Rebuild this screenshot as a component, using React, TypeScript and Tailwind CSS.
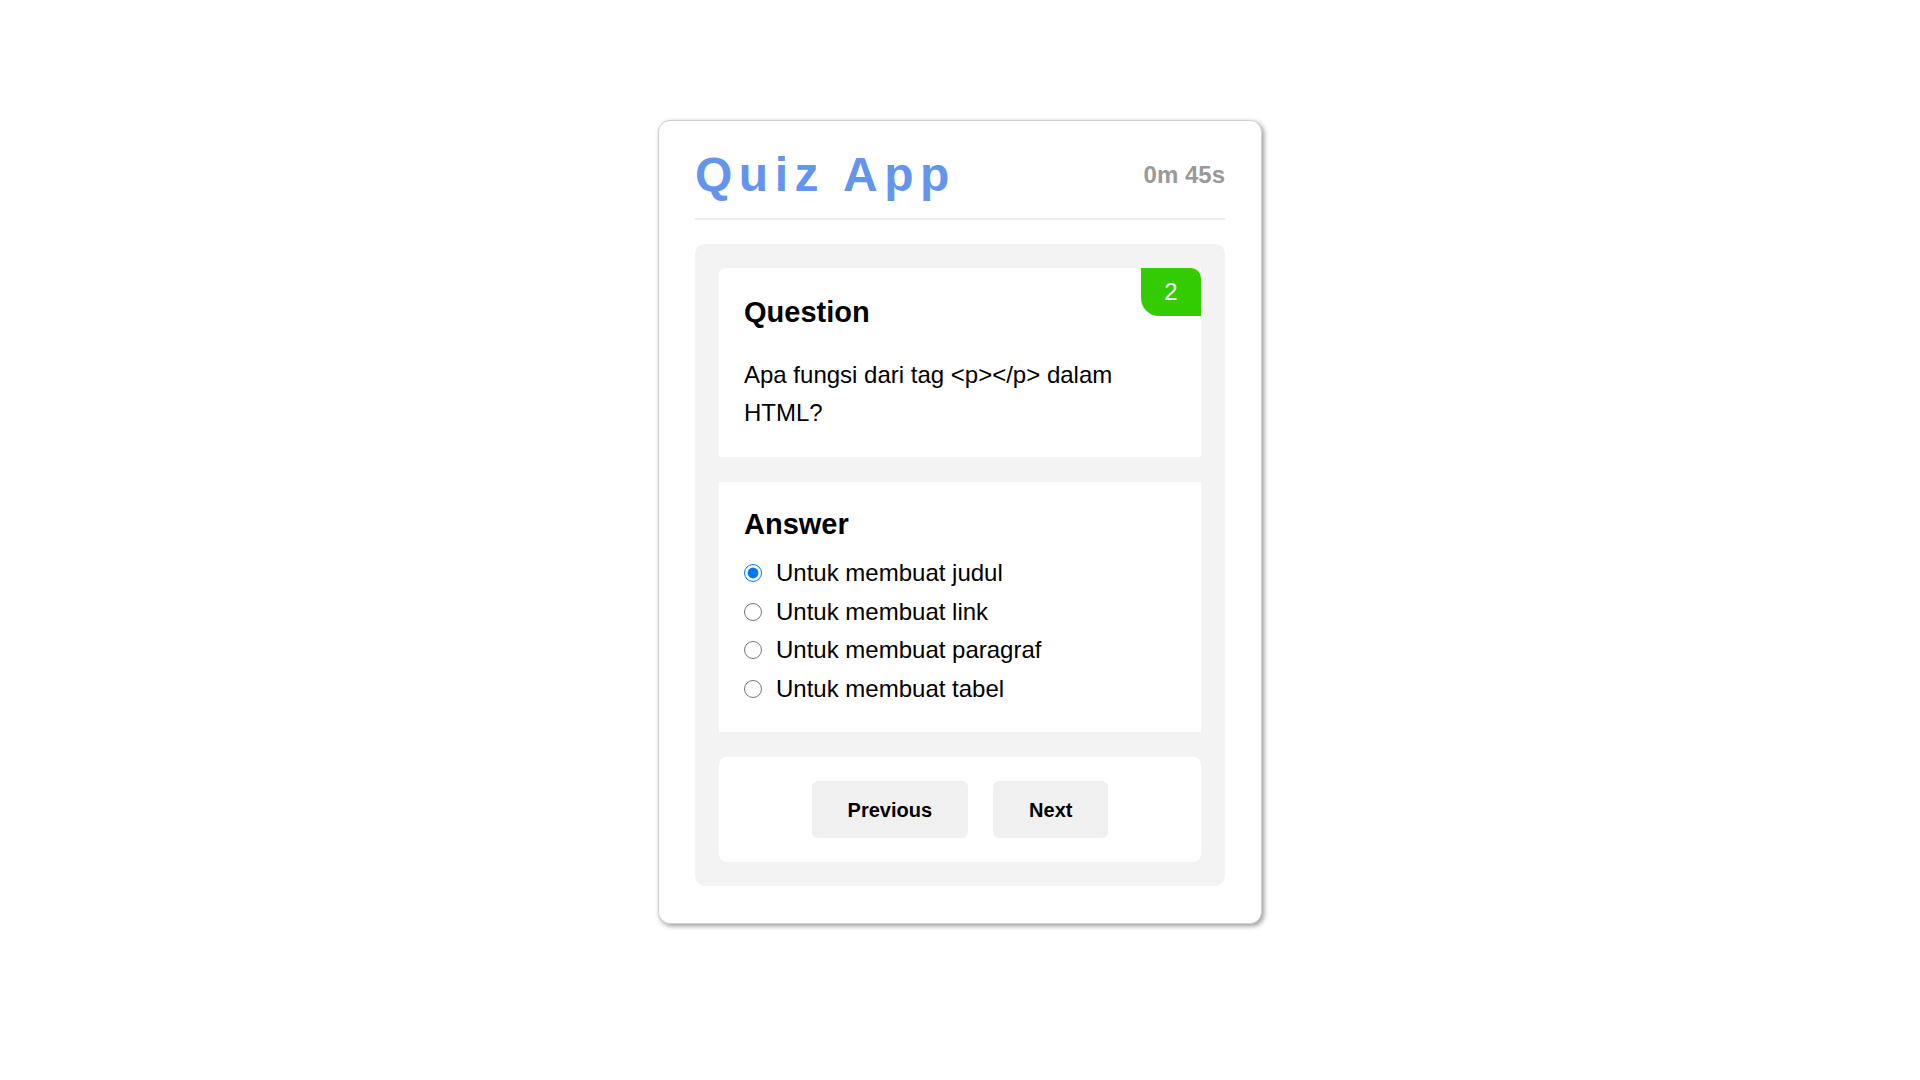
import React, { useState } from 'react';

const options = [
  'Untuk membuat judul',
  'Untuk membuat link',
  'Untuk membuat paragraf',
  'Untuk membuat tabel',
];

export default function App() {
  const [selected, setSelected] = useState(0);

  return (
    <div className="min-h-screen bg-white pt-[120px] font-['Liberation_Sans',Arial,sans-serif] text-black">
      <div className="mx-auto w-[604px] rounded-[12px] border border-[#d0d0d0] bg-white px-[36px] pt-[26px] pb-[37px] shadow-[2px_2px_5px_rgba(0,0,0,0.4)]">
        {/* header */}
        <div className="flex items-center justify-between border-b-2 border-[#eeeeee] pb-[16px]">
          <h1 className="text-[48px] leading-[55px] font-bold tracking-[6.5px] text-[#6495ed]">Quiz App</h1>
          <span className="text-[24px] font-bold text-[#999999]">0m 45s</span>
        </div>

        <div className="mt-[24px] flex flex-col gap-[25px] rounded-[10px] bg-[#f3f3f3] p-[24px]">
          {/* question */}
          <div className="relative rounded-tl-md bg-white px-[25px] pt-[28px] pb-[25px]">
            <div className="absolute top-0 right-0 flex h-[48px] w-[60px] items-center justify-center rounded-tr-[10px] rounded-bl-[18px] bg-[#33cc00] text-[24px] text-white">
              2
            </div>
            <h2 className="mb-[27px] text-[29px] leading-[33px] font-bold">Question</h2>
            <p className="text-[24px] leading-[38px]">Apa fungsi dari tag &lt;p&gt;&lt;/p&gt; dalam HTML?</p>
          </div>

          {/* answer */}
          <div className="bg-white px-[25px] pt-[26px] pb-[24px]">
            <h2 className="mb-[13px] text-[29px] leading-[33px] font-bold">Answer</h2>
            <div className="flex flex-col">
              {options.map((opt, i) => (
                <label key={opt} className="flex h-[38.5px] items-center gap-[14px] text-[24px]">
                  <input
                    type="radio"
                    name="answer"
                    checked={selected === i}
                    onChange={() => setSelected(i)}
                    className="m-0 h-[18px] w-[18px] accent-[#0075ff]"
                  />
                  <span>{opt}</span>
                </label>
              ))}
            </div>
          </div>

          {/* nav */}
          <div className="flex justify-center gap-[25px] rounded-lg bg-white py-[24px]">
            <button className="h-[57px] rounded-md bg-[#f0f0f0] px-[36px] text-[20px] font-bold">Previous</button>
            <button className="h-[57px] rounded-md bg-[#f0f0f0] px-[36px] text-[20px] font-bold">Next</button>
          </div>
        </div>
      </div>
    </div>
  );
}
